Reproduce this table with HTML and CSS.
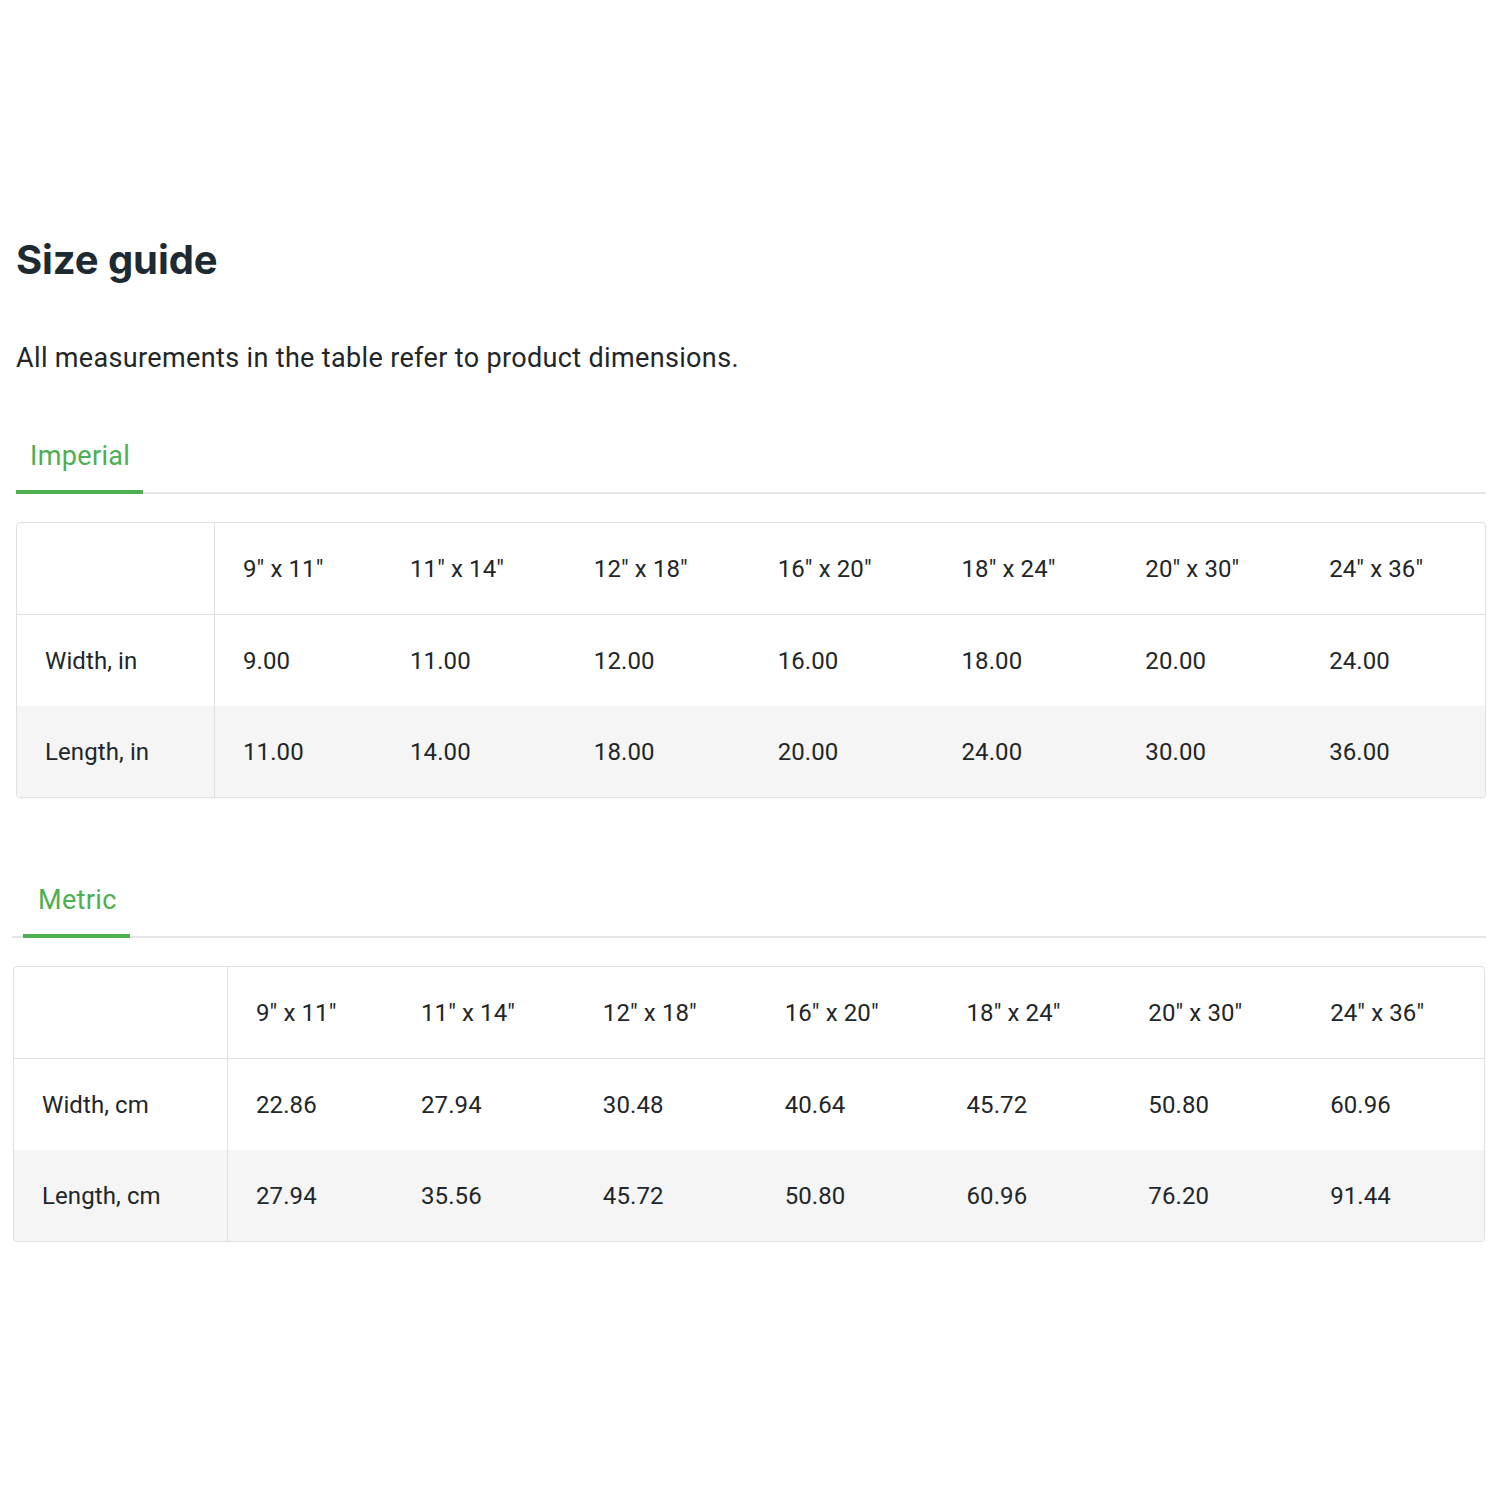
FILE: index.html
```html
<!DOCTYPE html>
<html lang="en">
<head>
<meta charset="utf-8">
<title>Size guide</title>
<link rel="stylesheet" href="styles.css">
</head>
<body>
<main class="page">
  <h1 class="title">Size guide</h1>
  <p class="intro">All measurements in the table refer to product dimensions.</p>

  <section class="block block-imperial">
    <div class="tabs">
      <div class="tab">Imperial</div>
    </div>
    <table class="sizes">
      <colgroup>
        <col class="col-label">
        <col class="col-narrow">
        <col><col><col><col><col><col>
      </colgroup>
      <tr class="row-head">
        <td class="label"></td>
        <td>9" x 11"</td><td>11" x 14"</td><td>12" x 18"</td><td>16" x 20"</td><td>18" x 24"</td><td>20" x 30"</td><td>24" x 36"</td>
      </tr>
      <tr class="row-white">
        <td class="label">Width, in</td>
        <td>9.00</td><td>11.00</td><td>12.00</td><td>16.00</td><td>18.00</td><td>20.00</td><td>24.00</td>
      </tr>
      <tr class="row-grey">
        <td class="label">Length, in</td>
        <td>11.00</td><td>14.00</td><td>18.00</td><td>20.00</td><td>24.00</td><td>30.00</td><td>36.00</td>
      </tr>
    </table>
  </section>

  <section class="block block-metric">
    <div class="tabs">
      <div class="tab">Metric</div>
    </div>
    <table class="sizes">
      <colgroup>
        <col class="col-label">
        <col class="col-narrow">
        <col><col><col><col><col><col>
      </colgroup>
      <tr class="row-head">
        <td class="label"></td>
        <td>9" x 11"</td><td>11" x 14"</td><td>12" x 18"</td><td>16" x 20"</td><td>18" x 24"</td><td>20" x 30"</td><td>24" x 36"</td>
      </tr>
      <tr class="row-white">
        <td class="label">Width, cm</td>
        <td>22.86</td><td>27.94</td><td>30.48</td><td>40.64</td><td>45.72</td><td>50.80</td><td>60.96</td>
      </tr>
      <tr class="row-grey">
        <td class="label">Length, cm</td>
        <td>27.94</td><td>35.56</td><td>45.72</td><td>50.80</td><td>60.96</td><td>76.20</td><td>91.44</td>
      </tr>
    </table>
  </section>
</main>
</body>
</html>
```

FILE: styles.css
```css
html, body {
  margin: 0;
  padding: 0;
  background: #ffffff;
}

.page {
  padding: 236px 14px 0 16px;
  font-family: Roboto, "Liberation Sans", sans-serif;
  color: #222628;
}

.title {
  margin: 0;
  font-family: Inter, "Liberation Sans", sans-serif;
  font-weight: 700;
  font-size: 40px;
  line-height: 48px;
  color: #1d2a31;
  letter-spacing: -0.1px;
}

.intro {
  margin: 56px 0 0 0;
  font-size: 27px;
  line-height: 36px;
  letter-spacing: 0.35px;
  color: #222628;
}

.block-imperial {
  margin-top: 62px;
}

.block-metric {
  margin-top: 84px;
}

.tabs {
  display: flex;
  border-bottom: 2px solid #e6e6e6;
}

.tab {
  font-size: 27px;
  line-height: 36px;
  letter-spacing: 0.35px;
  color: #4caf50;
  padding: 0 13px 16px 14px;
  border-bottom: 4px solid #4caf50;
  margin-bottom: -2px;
}

.block-metric .tabs {
  margin-left: -4px;
}

.block-metric .tab {
  margin-left: 11px;
  padding: 0 13px 16px 15px;
}

.sizes {
  margin-top: 28px;
  width: 1470px;
  table-layout: fixed;
  border-collapse: separate;
  border-spacing: 0;
  border: 1px solid #e0e0e0;
  border-radius: 4px;
  overflow: hidden;
  font-size: 24px;
  color: #222628;
  box-shadow: 0 1px 1px rgba(0, 0, 0, 0.04);
}

.block-metric .sizes {
  width: 1472px;
  margin-left: -3px;
}

.col-label { width: 198px; }
.col-narrow { width: 167px; }

.block-metric .col-label { width: 214px; }
.block-metric .col-narrow { width: 165px; }

.sizes td {
  height: 91px;
  padding: 0 0 0 28px;
  vertical-align: middle;
  white-space: nowrap;
  letter-spacing: 0.1px;
}

.sizes td.label {
  border-right: 1px solid #e0e0e0;
}

.row-head td {
  border-bottom: 1px solid #e0e0e0;
}

.row-white td {
  background: #ffffff;
}

.row-grey td {
  background: #f5f5f5;
}
```
